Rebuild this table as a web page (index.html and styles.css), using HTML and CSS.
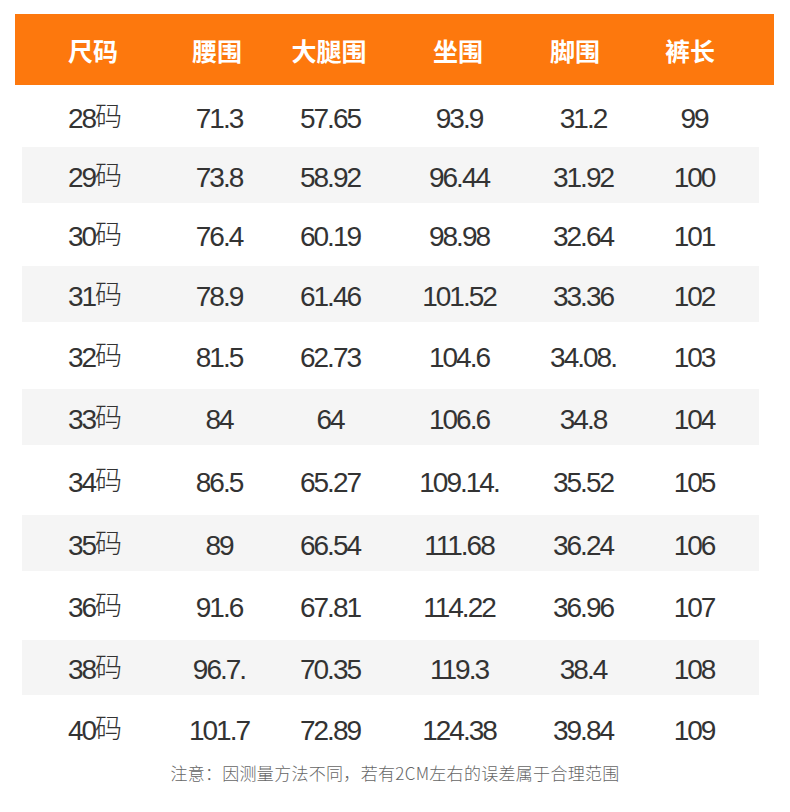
FILE: index.html
```html
<!DOCTYPE html>
<html lang="zh">
<head>
<meta charset="utf-8">
<link rel="stylesheet" href="styles.css">
</head>
<body>
<div class="page">
  <div class="head">
    <div>尺码</div><div>腰围</div><div>大腿围</div><div>坐围</div><div>脚围</div><div>裤长</div>
  </div>
  <div class="rows">
    <div class="row"><div>28<span class="unit">码</span></div><div>71.3</div><div>57.65</div><div>93.9</div><div>31.2</div><div>99</div></div>
    <div class="row"><div>29<span class="unit">码</span></div><div>73.8</div><div>58.92</div><div>96.44</div><div>31.92</div><div>100</div></div>
    <div class="row"><div>30<span class="unit">码</span></div><div>76.4</div><div>60.19</div><div>98.98</div><div>32.64</div><div>101</div></div>
    <div class="row"><div>31<span class="unit">码</span></div><div>78.9</div><div>61.46</div><div>101.52</div><div>33.36</div><div>102</div></div>
    <div class="row"><div>32<span class="unit">码</span></div><div>81.5</div><div>62.73</div><div>104.6</div><div>34.08.</div><div>103</div></div>
    <div class="row"><div>33<span class="unit">码</span></div><div>84</div><div>64</div><div>106.6</div><div>34.8</div><div>104</div></div>
    <div class="row"><div>34<span class="unit">码</span></div><div>86.5</div><div>65.27</div><div>109.14.</div><div>35.52</div><div>105</div></div>
    <div class="row"><div>35<span class="unit">码</span></div><div>89</div><div>66.54</div><div>111.68</div><div>36.24</div><div>106</div></div>
    <div class="row"><div>36<span class="unit">码</span></div><div>91.6</div><div>67.81</div><div>114.22</div><div>36.96</div><div>107</div></div>
    <div class="row"><div>38<span class="unit">码</span></div><div>96.7.</div><div>70.35</div><div>119.3</div><div>38.4</div><div>108</div></div>
    <div class="row"><div>40<span class="unit">码</span></div><div>101.7</div><div>72.89</div><div>124.38</div><div>39.84</div><div>109</div></div>
  </div>
  <p class="note">注意：因测量方法不同，若有2CM左右的误差属于合理范围</p>
</div>
</body>
</html>
```
FILE: styles.css
```css
html, body {
  margin: 0;
  padding: 0;
  background: #ffffff;
}
.page {
  width: 790px;
  height: 812px;
  padding-top: 14px;
  box-sizing: border-box;
  font-family: "Liberation Sans", "Noto Sans CJK SC", sans-serif;
}
.head {
  margin: 0 16px 0 15px;
  height: 71px;
  background: #fd780d;
  color: #ffffff;
  display: grid;
  grid-template-columns: 156px 92px 132px 126px 108px 122px;
  align-items: center;
  font-family: "Noto Sans CJK SC", sans-serif;
  font-weight: 700;
  font-size: 25px;
  text-align: center;
}
.rows {
  margin: 0 31px 0 22px;
}
.row {
  display: grid;
  grid-template-columns: 146px 102px 120px 138px 110px 112px;
  padding-top: 5px;
  box-sizing: border-box;
  align-items: center;
  text-align: center;
  font-size: 28px;
  line-height: 32px;
  letter-spacing: -2px;
  color: #333333;
}
.unit {
  font-family: "Noto Sans CJK SC", sans-serif;
  font-weight: 300;
  font-size: 27px;
  line-height: 20px;
  letter-spacing: 0;
  vertical-align: 2px;
}
.row:nth-child(even) {
  background: #f5f5f5;
}
.row:nth-child(1) { height: 62px; }
.row:nth-child(2) { height: 56px; }
.row:nth-child(3) { height: 63px; }
.row:nth-child(4) { height: 56px; }
.row:nth-child(5) { height: 67px; }
.row:nth-child(6) { height: 56px; }
.row:nth-child(7) { height: 70px; }
.row:nth-child(8) { height: 56px; }
.row:nth-child(9) { height: 69px; }
.row:nth-child(10) { height: 55px; }
.row:nth-child(11) { height: 66px; }
.note {
  margin: 2px 0 0 0;
  text-align: center;
  font-family: "Noto Sans CJK SC", sans-serif;
  font-weight: 300;
  font-size: 17px;
  letter-spacing: 0.3px;
  line-height: 20px;
  color: #666666;
}
```
